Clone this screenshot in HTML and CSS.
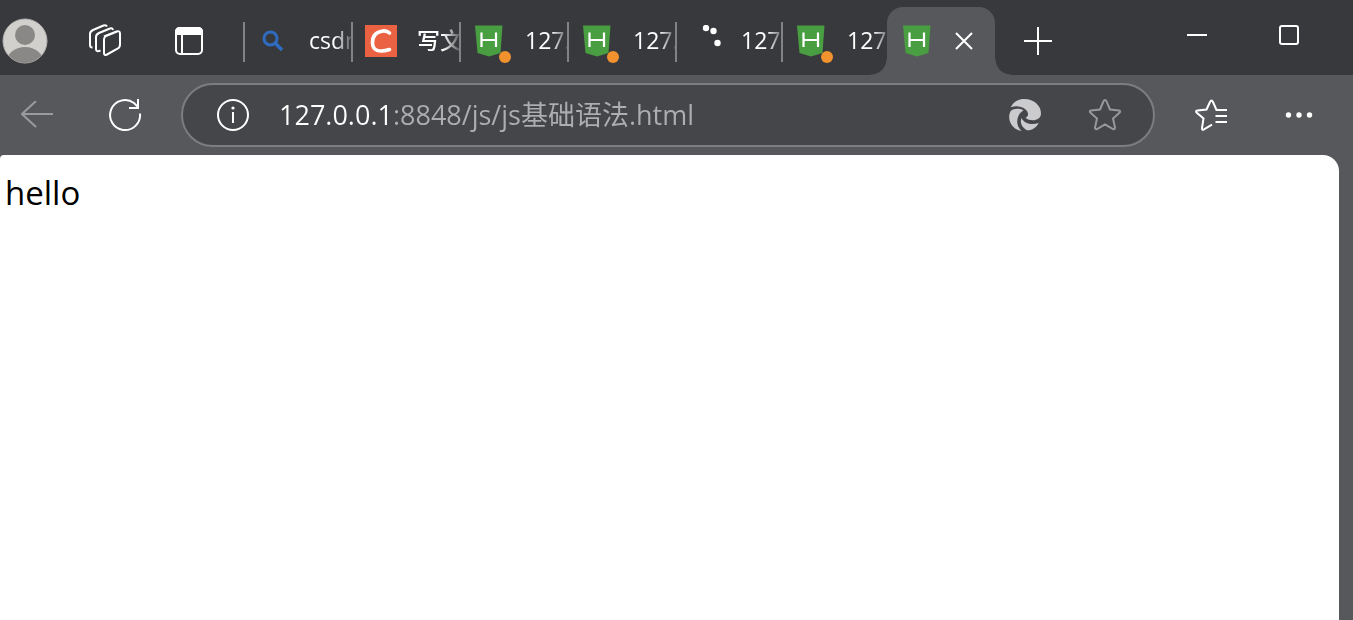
FILE: index.html
```html
<!DOCTYPE html>
<html lang="zh-CN">
<head>
    <meta charset="UTF-8">
    <meta name="viewport" content="width=device-width, initial-scale=1.0">
    <title>js基础语法</title>
    <link rel="stylesheet" href="styles.css">
</head>
<body>
    <!-- shared favicon -->
    <svg class="sprite" aria-hidden="true">
        <symbol id="hbuilder" viewBox="0 0 32 32">
            <path d="M2 0.500H29.500L27.500 28L16 31.500L4.500 28Z" fill="#4a9e42"/>
            <path d="M8.500 7.500V22M23 7.500V22M9 15H23" fill="none" stroke="#fff" stroke-width="2.200"/>
        </symbol>
    </svg>

    <header class="titlebar">
        <button class="profile" aria-label="Profile">
            <svg width="46" height="46" viewBox="0 0 46 46">
                <defs><clipPath id="face"><circle cx="23" cy="23" r="22"/></clipPath></defs>
                <circle cx="23" cy="23" r="22" fill="#d2d0cd" stroke="#b5b3b1" stroke-width="1"/>
                <g clip-path="url(#face)" fill="#8a8886">
                    <circle cx="23" cy="17" r="10"/>
                    <ellipse cx="23" cy="45" rx="19" ry="16"/>
                </g>
            </svg>
        </button>
        <button class="icon-btn" aria-label="Workspaces">
            <svg width="34" height="34" viewBox="0 0 34 34" class="line">
                <path d="M16 12.500L28.500 7.500Q32 6.500 32 9.500V20.500Q32 23.500 29.500 24.700L19 30.500Q16 32 16 29V15.500Q16 13.200 18 12.200L29 7.500"/>
                <path d="M25 6Q24.500 3.500 22 4.500L11 9Q8 10.500 8 13V25Q8 28.500 12.500 26.500"/>
                <path d="M19 2.500Q18 0.500 15.500 1.500L5 6Q2 7.500 2 10V21Q2 23.500 4.500 23.500"/>
            </svg>
        </button>
        <button class="icon-btn vertical-tabs" aria-label="Tab actions menu">
            <svg width="28" height="28" viewBox="0 0 28 28" class="line">
                <rect x="1" y="1" width="26" height="26" rx="4"/>
                <path d="M1 8V5Q1 1 5 1H23Q27 1 27 5V7H1Z" fill="#fff"/>
                <path d="M7 8V27"/>
            </svg>
        </button>

        <nav class="tabs" aria-label="Tabs">
            <button class="tab">
                <svg class="favicon" viewBox="0 0 32 32">
                    <circle cx="13.500" cy="13.500" r="6.500" fill="none" stroke="#2f6cc0" stroke-width="3"/>
                    <path d="M18.500 18.500L25 25" stroke="#2f6cc0" stroke-width="3.500"/>
                </svg>
                <span class="tab-title">csdn</span>
            </button>
            <button class="tab">
                <svg class="favicon" viewBox="0 0 32 32">
                    <rect width="32" height="32" fill="#ea6241"/>
                    <path d="M24.500 8Q21.500 5 16.500 6.200C10 7.500 7.300 12 7.500 18C7.700 25.500 14 28 24.500 24.500" fill="none" stroke="#fff" stroke-width="3.600" stroke-linecap="round"/>
                </svg>
                <span class="tab-title cjk">写文</span>
            </button>
            <button class="tab">
                <span class="favicon dot"><svg viewBox="0 0 32 32"><use href="#hbuilder"/></svg></span>
                <span class="tab-title">127.</span>
            </button>
            <button class="tab">
                <span class="favicon dot"><svg viewBox="0 0 32 32"><use href="#hbuilder"/></svg></span>
                <span class="tab-title">127.</span>
            </button>
            <button class="tab narrow">
                <svg class="favicon" viewBox="0 0 32 32" fill="#fff">
                    <circle cx="17" cy="3" r="3.200"/>
                    <circle cx="24.500" cy="6" r="3.200"/>
                    <circle cx="28.500" cy="18" r="3.200"/>
                </svg>
                <span class="tab-title">127</span>
            </button>
            <button class="tab narrow">
                <span class="favicon dot"><svg viewBox="0 0 32 32"><use href="#hbuilder"/></svg></span>
                <span class="tab-title">127</span>
            </button>
            <div class="tab active">
                <svg class="favicon" viewBox="0 0 32 32"><use href="#hbuilder"/></svg>
                <button class="close" aria-label="Close tab">
                    <svg width="18" height="18" viewBox="0 0 18 18" class="line"><path d="M1 1L17 17M17 1L1 17"/></svg>
                </button>
            </div>
        </nav>
        <button class="icon-btn new-tab" aria-label="New tab">
            <svg width="28" height="28" viewBox="0 0 28 28" class="line"><path d="M14 0V28M0 14H28"/></svg>
        </button>

        <div class="window-controls">
            <button aria-label="Minimize">
                <svg width="20" height="20" viewBox="0 0 20 20" class="line"><path d="M0 10H20"/></svg>
            </button>
            <button aria-label="Maximize">
                <svg width="20" height="20" viewBox="0 0 20 20" class="line"><rect x="1" y="1" width="18" height="18" rx="2"/></svg>
            </button>
        </div>
    </header>

    <div class="toolbar">
        <button class="icon-btn back" aria-label="Back" disabled>
            <svg width="32" height="28" viewBox="0 0 32 28" class="line"><path d="M15 0L1 13L15 26M1 13H32"/></svg>
        </button>
        <button class="icon-btn" aria-label="Refresh">
            <svg width="34" height="34" viewBox="0 0 34 34" class="line">
                <path d="M32 15.500A15 15 0 1 1 26 5L30 9"/>
                <path d="M30 1V10H21"/>
            </svg>
        </button>
        <div class="address">
            <button class="site-info" aria-label="Site information">
                <svg width="32" height="32" viewBox="0 0 32 32" class="line">
                    <circle cx="16" cy="16" r="15"/>
                    <path d="M16 13V24"/>
                    <circle cx="16" cy="9" r="1.600" fill="#fff" stroke="none"/>
                </svg>
            </button>
            <input class="url" type="text" value="127.0.0.1:8848/js/js基础语法.html" aria-label="Address" spellcheck="false">
            <button class="icon-btn" aria-label="Open in app">
                <svg width="32" height="32" viewBox="0 0 32 32" fill="#cbcbcd">
                    <path d="M1.700 8.300C5 2 10 0 15.500 0C25 0 32 6.500 32 14.500C32 19 28 21.300 24 21.300C21 21.300 18 20.500 16.300 18.800C20.500 17.500 19.500 12.500 16 10C12 7.200 7 6.500 1.700 8.300Z"/>
                    <path d="M14.500 11.300C10 9 4.500 9.500 1.700 12C-1 17 0 23 3.500 27C6 30 9 31.500 12.500 32C8.500 28.500 7.500 23.500 8.700 19C9.700 15.300 11.800 13 14.500 11.300Z"/>
                    <path d="M12.500 19C10.500 24 13.500 29 18 31.300C23 31.500 27.500 28.500 29.700 24C23 26.500 15 24.500 12.500 19Z"/>
                </svg>
            </button>
            <button class="icon-btn favorite" aria-label="Add to favorites">
                <svg width="34" height="34" viewBox="0 0 34 34" class="line">
                    <path d="M17 2Q18 2 18.600 3.500L22 11.500L31 12.500Q33 13 31.700 14.500L25 20.500L27 29.500Q27 31.800 25 31L17 26.500L9 31Q7 31.800 7 29.500L9 20.500L2.300 14.500Q1 13 3 12.500L12 11.500L15.400 3.500Q16 2 17 2Z"/>
                </svg>
            </button>
        </div>
        <button class="icon-btn" aria-label="Favorites">
            <svg width="34" height="34" viewBox="0 0 34 34" class="line">
                <path d="M33 12H22.500L19 4Q17.500 1 16 4L12.500 11.500L3.500 12.500Q1 13 2.800 14.800L9.500 20.500L8 30Q7.800 32.500 10 31.300L18 26.700"/>
                <path d="M21.500 18H33M21.500 24H33"/>
            </svg>
        </button>
        <button class="icon-btn" aria-label="Settings and more">
            <svg width="28" height="8" viewBox="0 0 28 8" fill="#fff">
                <circle cx="3.500" cy="4" r="2.700"/>
                <circle cx="14" cy="4" r="2.700"/>
                <circle cx="24.500" cy="4" r="2.700"/>
            </svg>
        </button>
    </div>

    <main class="page">hello</main>
</body>
</html>
```
FILE: styles.css
```css
* {
    box-sizing: border-box;
}
body {
    margin: 0;
    min-height: 100vh;
    display: flex;
    flex-direction: column;
    background: #57585c;
    font-family: "Open Sans", "Noto Sans CJK SC", sans-serif;
    color: #fff;
}
button {
    display: flex;
    align-items: center;
    justify-content: center;
    flex: none;
    padding: 0;
    border: none;
    background: none;
    color: inherit;
    font: inherit;
}
svg {
    display: block;
    flex: none;
}
.sprite {
    position: absolute;
    width: 0;
    height: 0;
}
.line {
    fill: none;
    stroke: #fff;
    stroke-width: 2;
}
.icon-btn {
    width: 64px;
    height: 64px;
}

/* title bar */
.titlebar {
    display: flex;
    align-items: center;
    height: 75px;
    padding-top: 7px;
    background: #38393d;
}
.profile {
    width: 50px;
    height: 68px;
}
.profile + .icon-btn {
    margin-left: 23px;
}
.vertical-tabs {
    margin-left: 20px;
}
.tabs {
    display: flex;
    height: 68px;
    margin-left: 22px;
}
.tab {
    position: relative;
    display: flex;
    align-items: center;
    justify-content: flex-start;
    gap: 20px;
    width: 108px;
    height: 68px;
    padding-left: 14px;
    font-size: 23px;
    line-height: 32px;
}
.tab.narrow {
    width: 106px;
}
button.tab::before {
    content: "";
    position: absolute;
    left: 0;
    top: 15px;
    width: 2px;
    height: 40px;
    background: #828386;
}
.favicon {
    position: relative;
    flex: none;
    width: 32px;
    height: 32px;
}
.dot::after {
    content: "";
    position: absolute;
    right: -6px;
    bottom: -6px;
    width: 12px;
    height: 12px;
    border-radius: 50%;
    background: #f2922f;
}
.tab-title {
    flex: 1;
    padding-bottom: 2px;
    overflow: hidden;
    white-space: nowrap;
    text-align: left;
    mask-image: linear-gradient(to right, #000 26px, transparent 46px);
}
.tab-title.cjk {
    font-weight: 500;
}
.tab.active {
    gap: 19px;
    border-radius: 16px 16px 0 0;
    background: #57585c;
}
/* flared feet of the active tab */
.tab.active::before,
.tab.active::after {
    content: "";
    position: absolute;
    bottom: 0;
    width: 16px;
    height: 16px;
}
.tab.active::before {
    right: 100%;
    background: radial-gradient(circle at 0 0, transparent 15px, #57585c 16px);
}
.tab.active::after {
    left: 100%;
    background: radial-gradient(circle at 100% 0, transparent 15px, #57585c 16px);
}
.close {
    width: 24px;
    height: 32px;
}
.new-tab {
    margin-left: 11px;
}
.window-controls {
    display: flex;
    align-self: flex-start;
    margin-left: auto;
    padding-right: 18px;
}
.window-controls button {
    width: 92px;
    height: 56px;
}

/* toolbar */
.toolbar {
    display: flex;
    align-items: center;
    gap: 24px;
    height: 80px;
    padding: 0 22px 0 5px;
}
.back .line {
    stroke: #9a9b9e;
}
.address {
    display: flex;
    align-items: center;
    gap: 16px;
    flex: 1;
    height: 64px;
    padding: 0 16px 0 34px;
    border: 2px solid #7c7d80;
    border-radius: 32px;
    background: #45464a;
}
.url {
    flex: 1;
    min-width: 0;
    height: 48px;
    margin-left: 14px;
    padding: 0 0 4px;
    border: none;
    outline: none;
    font-family: inherit;
    font-size: 27px;
    /* host is bright, the rest of the address is dimmed */
    background: linear-gradient(to right, #fff 113px, #adaeb0 113px);
    background-clip: text;
    -webkit-background-clip: text;
    color: transparent;
    caret-color: #fff;
}
.favorite .line {
    stroke: #97989b;
}

/* page content */
.page {
    flex: 1;
    margin-right: 14px;
    padding: 14px 5px;
    border-radius: 4px 16px 0 0;
    background: #fff;
    color: #000;
    font-size: 33px;
    line-height: 48px;
}
```
